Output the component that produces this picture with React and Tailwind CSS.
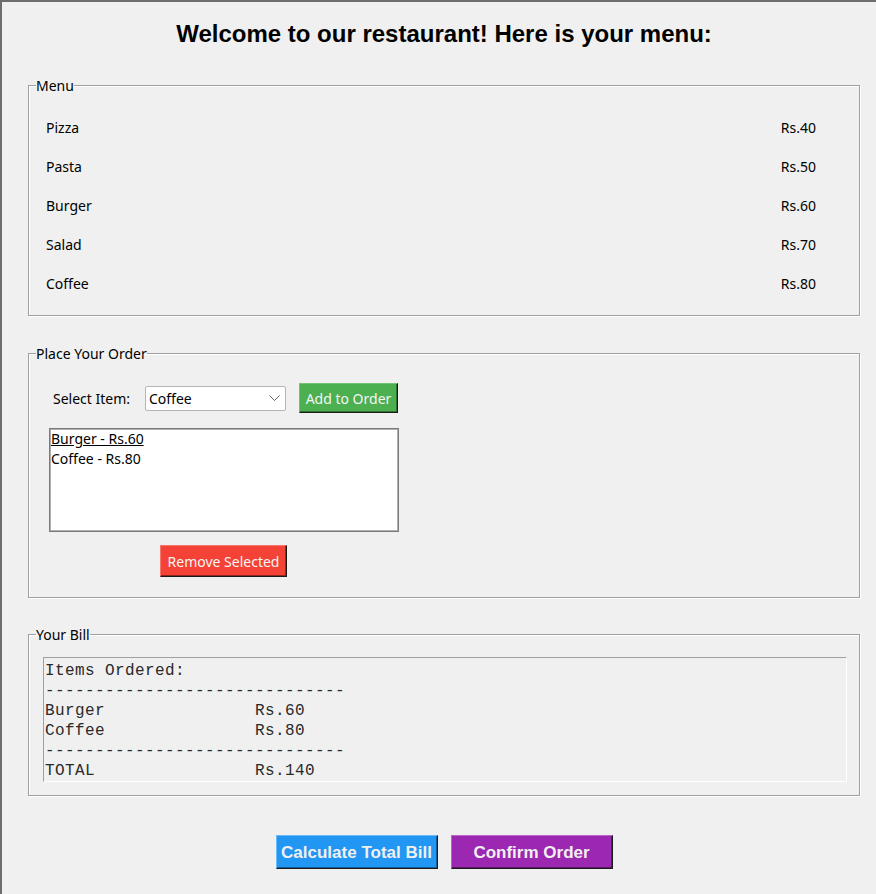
const menu = [
  ["Pizza", "Rs.40"],
  ["Pasta", "Rs.50"],
  ["Burger", "Rs.60"],
  ["Salad", "Rs.70"],
  ["Coffee", "Rs.80"],
];

const bill = [
  "Items Ordered:",
  "------------------------------",
  "Burger               Rs.60",
  "Coffee               Rs.80",
  "------------------------------",
  "TOTAL                Rs.140",
];

function Group({ label, children, className = "" }) {
  return (
    <fieldset className={`border border-[#a0a0a0] shadow-[1px_1px_0_#ffffff,inset_1px_1px_0_#ffffff] min-w-0 ${className}`}>
      <legend className="ml-[7px] p-0 pt-[2px] text-[14px] leading-[16px] text-black">{label}</legend>
      {children}
    </fieldset>
  );
}

export default function App() {
  return (
    <div className="w-[876px] h-[894px] overflow-hidden bg-[#f0f0f0] border-t-2 border-l-2 border-[#6e6e6e] pl-[26px] pr-[16px] font-['Noto_Sans',sans-serif] text-black">
      <h1 className="pt-[18px] text-center text-[24px] leading-[27px] font-bold font-['Liberation_Sans',Arial,sans-serif]">
        Welcome to our restaurant! Here is your menu:
      </h1>

      <Group label="Menu" className="mt-[29px]">
        <div className="pl-[17px] pr-[43px] pt-[14px] pb-[12px]">
          {menu.map(([name, price]) => (
            <div key={name} className="h-[39px] flex items-center justify-between text-[14px]">
              <span>{name}</span>
              <span>{price}</span>
            </div>
          ))}
        </div>
      </Group>

      <Group label="Place Your Order" className="mt-[28px]">
        <div className="pl-[20px] pt-[21px] pb-[20px]">
          <div className="flex items-center h-[30px]">
            <span className="ml-[4px] w-[92px] text-[14px]">Select Item:</span>
            <div className="w-[141px] h-[25px] bg-white border border-[#b4b4b4] rounded-[2px] flex items-center justify-between pl-[3px] pr-[5px] text-[14px]">
              <span>Coffee</span>
              <svg width="11" height="7" viewBox="0 0 11 7" fill="none">
                <path d="M0.5 0.5 L5.5 5.5 L10.5 0.5" stroke="#606060" strokeWidth="1" />
              </svg>
            </div>
            <button className="ml-[13px] w-[99px] h-[30px] bg-[#4caf50] text-[#f5f5f5] text-[14px] border border-t-[#6fc372] border-l-[#6fc372] border-r-[#1a1a1a] border-b-[#1a1a1a] shadow-[inset_-1px_-1px_0_#2f6f32]">
              Add to Order
            </button>
          </div>
          <div className="mt-[15px] w-[350px] h-[104px] bg-white border border-[#7a7a7a] shadow-[inset_1px_1px_0_#b0b0b0,inset_-1px_-1px_0_#b0b0b0] pl-[1px] pt-[0px] text-[14px] leading-[20px]">
            <div className="underline">Burger - Rs.60</div>
            <div>Coffee - Rs.80</div>
          </div>
          <button className="mt-[13px] ml-[111px] w-[127px] h-[32px] bg-[#f44336] text-[#f5f5f5] text-[14px] border border-t-[#f7756b] border-l-[#f7756b] border-r-[#1a1a1a] border-b-[#1a1a1a] shadow-[inset_-1px_-1px_0_#8f2a22]">
            Remove Selected
          </button>
        </div>
      </Group>

      <Group label="Your Bill" className="mt-[27px]">
        <div className="pl-[14px] pr-[12px] pt-[14px] pb-[13px]">
          <div className="h-[125px] overflow-hidden border border-t-[#a0a0a0] border-l-[#a0a0a0] border-r-white border-b-white bg-[#f0f0f0] pl-[1px] pt-[3px]">
            {bill.map((line, i) => (
              <div key={i} className="whitespace-pre font-['Liberation_Mono','Courier_New',monospace] text-[16px] leading-[20px] tracking-[0.4px] text-[#2a2a2a]">
                {line}
              </div>
            ))}
          </div>
        </div>
      </Group>

      <div className="mt-[39px] flex justify-center gap-[13px] font-['Liberation_Sans',Arial,sans-serif] font-bold text-[17px]">
        <button className="w-[162px] h-[34px] pt-[2px] bg-[#2196f3] text-[#f0f0f0] border border-t-[#6cbaf7] border-l-[#6cbaf7] border-r-[#1a1a1a] border-b-[#1a1a1a] shadow-[inset_-1px_-1px_0_#155e99]">
          Calculate Total Bill
        </button>
        <button className="w-[162px] h-[34px] pt-[2px] bg-[#9c27b0] text-[#f0f0f0] border border-t-[#b964c8] border-l-[#b964c8] border-r-[#1a1a1a] border-b-[#1a1a1a] shadow-[inset_-1px_-1px_0_#5e176a]">
          Confirm Order
        </button>
      </div>
    </div>
  );
}
